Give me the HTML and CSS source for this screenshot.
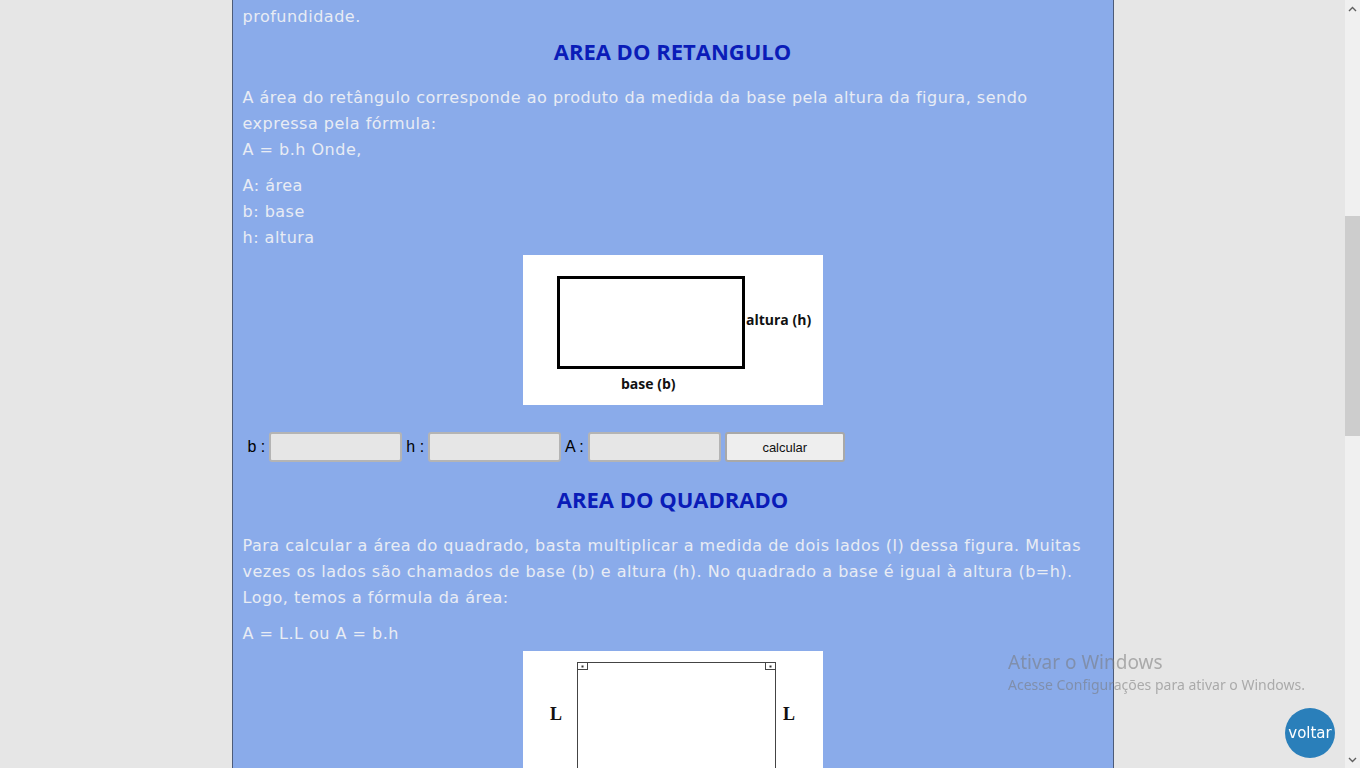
FILE: index.html
```html
<!DOCTYPE html>
<html lang="pt-BR">
<head>
<meta charset="utf-8">
<title>Áreas</title>
<link rel="stylesheet" href="styles.css">
</head>
<body>
<div class="viewport">
  <main class="page">
    <div class="sheet">
      <p class="text">profundidade.</p>

      <h2 class="title">AREA DO RETANGULO</h2>
      <p class="text">A área do retângulo corresponde ao produto da medida da base pela altura da figura, sendo expressa pela fórmula:<br>A = b.h Onde,</p>
      <p class="text">A: área<br>b: base<br>h: altura</p>

      <div class="figure">
        <svg class="fig-img" width="300" height="150" viewBox="0 0 300 150">
          <rect x="0" y="0" width="300" height="150" fill="#fff"/>
          <rect x="35.5" y="22.5" width="185" height="90" fill="none" stroke="#000" stroke-width="3"/>
          <text x="223" y="70" class="fig-label">altura (h)</text>
          <text x="98" y="134" class="fig-label">base (b)</text>
        </svg>
      </div>

      <form class="calc">
        <label class="calc-label">b :</label>
        <input class="calc-input" type="text">
        <label class="calc-label">h :</label>
        <input class="calc-input" type="text">
        <label class="calc-label">A :</label>
        <input class="calc-input" type="text">
        <button class="calc-btn" type="button">calcular</button>
      </form>

      <h2 class="title">AREA DO QUADRADO</h2>
      <p class="text">Para calcular a área do quadrado, basta multiplicar a medida de dois lados (l) dessa figura. Muitas vezes os lados são chamados de base (b) e altura (h). No quadrado a base é igual à altura (b=h). Logo, temos a fórmula da área:</p>
      <p class="text">A = L.L ou A = b.h</p>

      <div class="figure">
        <svg class="fig-img" width="300" height="300" viewBox="0 0 300 300">
          <rect x="0" y="0" width="300" height="300" fill="#fff"/>
          <rect x="54.5" y="11.5" width="198" height="260" fill="none" stroke="#444" stroke-width="1"/>
          <rect x="54.5" y="11.5" width="10" height="7" fill="none" stroke="#444" stroke-width="1"/>
          <rect x="242.5" y="11.5" width="10" height="7" fill="none" stroke="#444" stroke-width="1"/>
          <rect x="58.5" y="14.5" width="2" height="2" fill="#333"/>
          <rect x="246.5" y="14.5" width="2" height="2" fill="#333"/>
          <text x="27" y="69" class="fig-L">L</text>
          <text x="260" y="69" class="fig-L">L</text>
        </svg>
      </div>
    </div>
  </main>
  <div class="scrollbar">
    <div class="sb-arrow">
      <svg width="9" height="6" viewBox="0 0 9 6"><path d="M1 5 L4.5 1.5 L8 5" fill="none" stroke="#606060" stroke-width="1.4"/></svg>
    </div>
    <div class="sb-gap"></div>
    <div class="sb-thumb"></div>
    <div class="sb-rest"></div>
    <div class="sb-arrow">
      <svg width="9" height="6" viewBox="0 0 9 6"><path d="M1 1 L4.5 4.5 L8 1" fill="none" stroke="#606060" stroke-width="1.4"/></svg>
    </div>
  </div>
</div>

<div class="watermark">
  <div class="wm-title">Ativar o Windows</div>
  <div class="wm-sub">Acesse Configurações para ativar o Windows.</div>
</div>

<a class="voltar" href="#">voltar</a>
</body>
</html>
```
FILE: styles.css
```css
html, body {
  margin: 0;
  padding: 0;
  height: 100%;
  overflow: hidden;
}

body {
  background: #e6e6e6;
  font-family: "DejaVu Sans", sans-serif;
}

.viewport {
  display: flex;
  height: 768px;
}

.page {
  flex: 1;
  display: flex;
  justify-content: center;
  overflow: hidden;
}

.sheet {
  width: 860px;
  padding: 4px 10px 0 10px;
  background: #8aabea;
  border-left: 1px solid #4d5b78;
  border-right: 1px solid #4d5b78;
}

.text {
  margin: 0 0 10px 0;
  font-family: "DejaVu Sans", sans-serif;
  font-size: 16px;
  font-weight: 400;
  letter-spacing: 0.5px;
  line-height: 26px;
  color: #e8ecf4;
}

.title {
  margin: 10px 0 23px 0;
  text-align: center;
  font-family: "Open Sans", sans-serif;
  font-size: 22px;
  line-height: 22px;
  font-weight: 700;
  color: #0a1cb8;
}

.figure {
  display: flex;
  justify-content: center;
  margin-top: -6px;
}

.fig-img {
  display: block;
}

.fig-label {
  font-family: "Open Sans", sans-serif;
  font-weight: 700;
  font-size: 14px;
  fill: #111;
}

.fig-L {
  font-family: "Liberation Serif", serif;
  font-weight: 700;
  font-size: 18px;
  fill: #111;
}

.calc {
  display: flex;
  align-items: center;
  gap: 4px;
  margin: 27px 0 0 5px;
  height: 30px;
}

.calc-label {
  font-family: "Liberation Sans", Arial, sans-serif;
  font-size: 16px;
  color: #000;
}

.calc-input {
  box-sizing: border-box;
  width: 133px;
  height: 30px;
  margin: 0;
  background: #e6e6e6;
  border: 2px solid #b4b4b4;
  border-radius: 3px;
}

.calc-btn {
  box-sizing: border-box;
  width: 120px;
  height: 30px;
  margin: 0;
  background: #eeeeee;
  border: 2px solid #a8a8a8;
  border-radius: 3px;
  font-family: "Liberation Sans", Arial, sans-serif;
  font-size: 13px;
  color: #111;
}

.calc + .title {
  margin-top: 26px;
}

.scrollbar {
  width: 15px;
  display: flex;
  flex-direction: column;
  background: #f0f0f0;
}

.sb-arrow {
  height: 17px;
  display: flex;
  align-items: center;
  justify-content: center;
}

.sb-gap {
  height: 199px;
}

.sb-thumb {
  height: 220px;
  background: #cdcdcd;
}

.sb-rest {
  flex: 1;
}

.watermark {
  position: fixed;
  left: 1008px;
  top: 650px;
  font-family: "Noto Sans", "Open Sans", sans-serif;
  color: rgba(120, 120, 120, 0.55);
}

.wm-title {
  font-size: 19px;
  line-height: 24px;
}

.wm-sub {
  font-size: 14px;
  line-height: 22px;
}

.voltar {
  position: fixed;
  left: 1285px;
  top: 708px;
  width: 50px;
  height: 50px;
  border-radius: 50%;
  background: #2a7fba;
  color: #fff;
  display: flex;
  align-items: center;
  justify-content: center;
  text-decoration: none;
  font-family: "DejaVu Sans", sans-serif;
  font-size: 15px;
}
```
